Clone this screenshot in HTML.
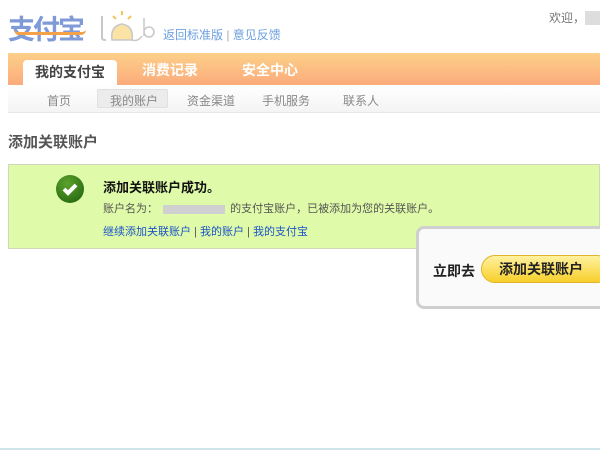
<!DOCTYPE html>
<html><head><meta charset="utf-8"><style>
*{margin:0;padding:0;box-sizing:border-box}
body{width:600px;height:450px;overflow:hidden;background:#fff;font-family:"Liberation Sans","Noto Sans CJK SC",sans-serif;position:relative;font-size:12px}
.a{position:absolute;white-space:nowrap}
</style></head><body>
<div class="a" style="left:8px;top:8px;font-size:27px;font-weight:bold;color:#7f9ad6;letter-spacing:-2px">支付宝</div>
<div class="a" style="left:14px;top:30px;width:72px;height:5px;border-bottom:3px solid #f3a24a;border-radius:0 0 40px 40px"></div>
<svg class="a" style="left:98px;top:6px" width="60" height="36"><path d="M4 10 V32 Q4 34 8 34" stroke="#c8c8c8" stroke-width="2" fill="none"/><path d="M14 34 Q12 20 24 18 Q36 20 34 34 Z" fill="#fbe3a6" stroke="#c8c8c8" stroke-width="1.5"/><path d="M24 5 v4 M15 10 l3 3 M33 10 l-3 3" stroke="#f5c45a" stroke-width="2"/><path d="M34 34 Q40 36 44 30 M46 12 V30 M46 26 a5 5 0 1 0 10 0 a5 5 0 1 0 -10 0" stroke="#c8c8c8" stroke-width="1.5" fill="none"/></svg>
<div class="a" style="left:163px;top:26px;font-size:12px;color:#6b9fde">返回标准版 <span style="color:#aaa">|</span> 意见反馈</div>
<div class="a" style="left:549px;top:9px;font-size:12px;color:#777">欢迎，<span style="background:#ddd;color:#ddd">某某</span></div>
<div class="a" style="left:8px;top:53px;width:592px;height:32px;background:linear-gradient(#fdd089,#fbab7c)"></div>
<div class="a" style="left:23px;top:60px;width:94px;height:26px;background:#fff;border-radius:4px 4px 0 0;font-size:14px;font-weight:bold;color:#444;text-align:center;line-height:24px">我的支付宝</div>
<div class="a" style="left:142px;top:60px;font-size:14px;font-weight:bold;color:#fff">消费记录</div>
<div class="a" style="left:242px;top:60px;font-size:14px;font-weight:bold;color:#fff">安全中心</div>
<div class="a" style="left:8px;top:85px;width:592px;height:28px;background:linear-gradient(#fff,#f4f4f4);border-bottom:1px solid #e6e6e6"></div>
<div class="a" style="left:97px;top:89px;width:71px;height:19px;background:#ececec;border:1px solid #e0e0e0;border-radius:2px"></div>
<div class="a" style="left:47px;top:92px;color:#888">首页</div>
<div class="a" style="left:110px;top:92px;color:#888">我的账户</div>
<div class="a" style="left:187px;top:92px;color:#888">资金渠道</div>
<div class="a" style="left:262px;top:92px;color:#888">手机服务</div>
<div class="a" style="left:343px;top:92px;color:#888">联系人</div>
<div class="a" style="left:8px;top:131px;font-size:15px;font-weight:bold;color:#555">添加关联账户</div>
<div class="a" style="left:8px;top:164px;width:592px;height:85px;background:#dffaa8;border:1px solid #cfd8b8"></div>
<div class="a" style="left:56px;top:175px;width:28px;height:28px;border-radius:50%;background:radial-gradient(circle at 40% 30%,#5ba32b,#1e5e0d)"></div>
<svg class="a" style="left:56px;top:175px" width="28" height="28"><path d="M8 14 l4 4 l8 -8" stroke="#fff" stroke-width="4" fill="none"/></svg>
<div class="a" style="left:103px;top:177px;font-size:13px;font-weight:bold;color:#111">添加关联账户成功。</div>
<div class="a" style="left:103px;top:200px;font-size:11px;color:#555">账户名为： <span style="display:inline-block;width:62px;height:9px;background:#d0d0d0;vertical-align:middle;margin:0 2px"></span> 的支付宝账户，已被添加为您的关联账户。</div>
<div class="a" style="left:103px;top:223px;font-size:11px;color:#1a54c8">继续添加关联账户 <span style="color:#555">|</span> 我的账户 <span style="color:#555">|</span> 我的支付宝</div>
<div class="a" style="left:416px;top:226px;width:200px;height:83px;background:#fafafa;border:3px solid #cfcfcf;border-radius:8px"></div>
<div class="a" style="left:433px;top:261px;font-size:14px;font-weight:bold;color:#222">立即去</div>
<div class="a" style="left:481px;top:255px;width:130px;height:28px;background:linear-gradient(#fff2a0,#f7cf2b);border:1px solid #e2b42a;border-radius:14px;font-size:14px;font-weight:bold;color:#222;line-height:26px;padding-left:17px">添加关联账户</div>
<div class="a" style="left:0;top:448px;width:600px;height:2px;background:#cfe6ea"></div>
</body></html>
